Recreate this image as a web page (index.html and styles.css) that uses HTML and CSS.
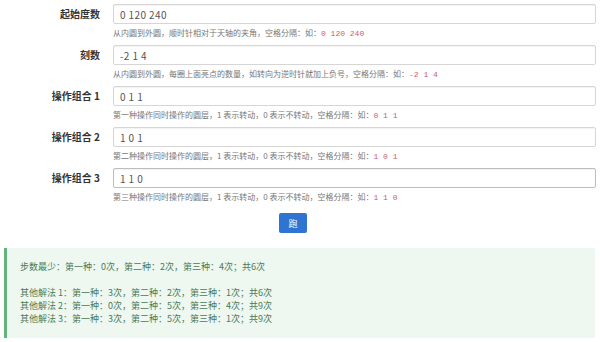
FILE: index.html
```html
<!DOCTYPE html>
<html lang="zh">
<head>
<meta charset="utf-8">
<link rel="stylesheet" href="styles.css">
</head>
<body>
<form class="form">
  <div class="row">
    <label class="label">起始度数</label>
    <div class="field">
      <input class="input" value="0 120 240">
      <p class="help">从内圆到外圆，顺时针相对于天轴的夹角，空格分隔：如：<code>0 120 240</code></p>
    </div>
  </div>
  <div class="row">
    <label class="label">刻数</label>
    <div class="field">
      <input class="input" value="-2 1 4">
      <p class="help">从内圆到外圆，每圈上面亮点的数量，如转向为逆时针就加上负号，空格分隔：如：<code>-2 1 4</code></p>
    </div>
  </div>
  <div class="row">
    <label class="label">操作组合 1</label>
    <div class="field">
      <input class="input" value="0 1 1">
      <p class="help">第一种操作同时操作的圆层，1 表示转动，0 表示不转动，空格分隔：如：<code>0 1 1</code></p>
    </div>
  </div>
  <div class="row">
    <label class="label">操作组合 2</label>
    <div class="field">
      <input class="input" value="1 0 1">
      <p class="help">第二种操作同时操作的圆层，1 表示转动，0 表示不转动，空格分隔：如：<code>1 0 1</code></p>
    </div>
  </div>
  <div class="row">
    <label class="label">操作组合 3</label>
    <div class="field">
      <input class="input input-focus" value="1 1 0">
      <p class="help">第三种操作同时操作的圆层，1 表示转动，0 表示不转动，空格分隔：如：<code>1 1 0</code></p>
    </div>
  </div>
  <div class="actions">
    <button type="button" class="btn">跑</button>
  </div>
</form>
<div class="result">
  <p class="line">步数最少：第一种：0次，第二种：2次，第三种：4次；共6次</p>
  <p class="line">&nbsp;</p>
  <p class="line">其他解法 1：第一种：3次，第二种：2次，第三种：1次；共6次</p>
  <p class="line">其他解法 2：第一种：0次，第二种：5次，第三种：4次；共9次</p>
  <p class="line">其他解法 3：第一种：3次，第二种：5次，第三种：1次；共9次</p>
</div>
</body>
</html>
```
FILE: styles.css
```css
* { box-sizing: border-box; }
html, body { margin: 0; padding: 0; background: #fff; }
body {
  font-family: "Noto Sans CJK SC", "Noto Sans", sans-serif;
  color: #333;
  padding: 4px 4px 0 4px;
}
.form { display: flex; flex-direction: column; }
.row {
  display: flex;
  align-items: flex-start;
  margin-bottom: 7px;
}
.label {
  width: 109px;
  padding-right: 13px;
  text-align: right;
  font-weight: bold;
  font-size: 10px;
  line-height: 20px;
  height: 20px;
  color: #333;
}
.field { flex: 1; display: flex; flex-direction: column; }
.input {
  width: 100%;
  height: 20px;
  border: 1px solid #d6d6d6;
  border-radius: 2px;
  padding: 0 6px;
  font-family: "Noto Sans CJK SC", "Noto Sans", sans-serif;
  font-size: 10px;
  letter-spacing: 0.4px;
  color: #555;
  outline: none;
  box-shadow: inset 0 1px 1px rgba(0,0,0,0.05);
}
.input-focus { border-color: #bdbdbd; }
.help {
  margin: 3px 0 0 0;
  height: 11px;
  font-size: 8px;
  line-height: 11px;
  color: #767676;
  white-space: nowrap;
}
.help code {
  font-family: "Liberation Mono", "DejaVu Sans Mono", monospace;
  font-size: 8px;
  line-height: 1;
  color: #cc5a70;
}
.actions {
  display: flex;
  justify-content: center;
  padding-right: 14px;
  margin-top: 4px;
}
.btn {
  width: 28px;
  height: 20px;
  border: none;
  border-radius: 2px;
  background: #2f74d0;
  color: #fff;
  font-family: "Noto Sans CJK SC", sans-serif;
  font-size: 9px;
  padding: 0;
}
.result {
  margin-top: 15px;
  margin-right: 1px;
  background: #eef8f1;
  border-left: 3px solid #62b37c;
  padding: 12px 0 13px 13px;
  color: #4a7a57;
  font-size: 9px;
}
.line { margin: 0; line-height: 13px; white-space: nowrap; }
```
